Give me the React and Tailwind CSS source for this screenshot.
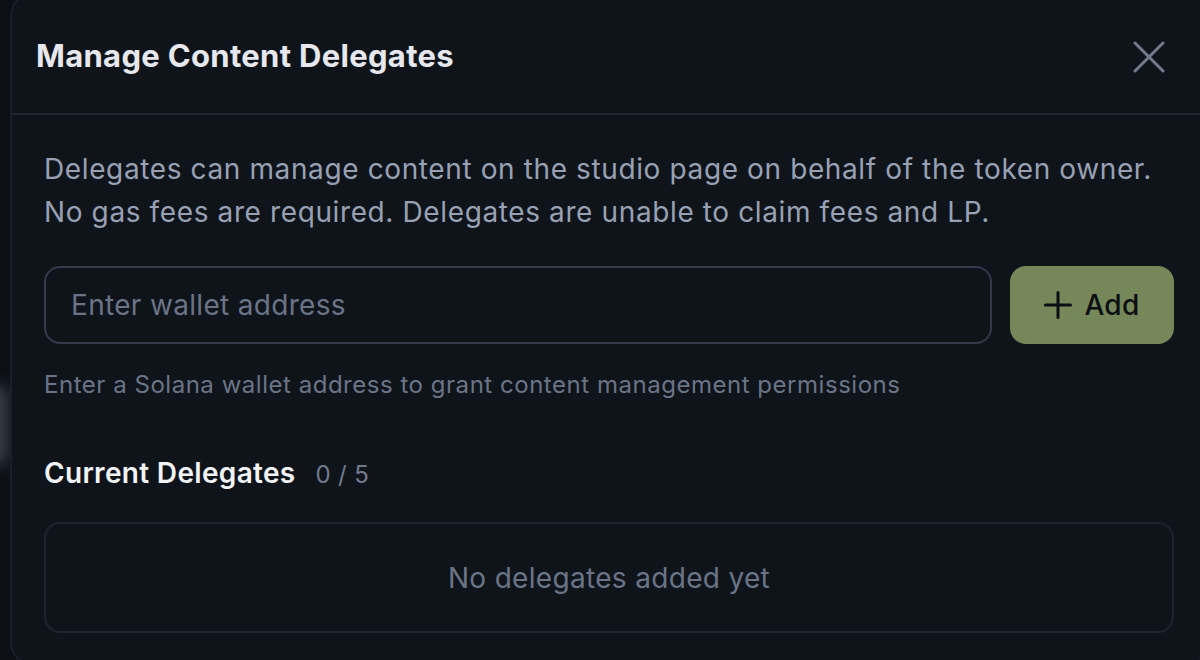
import React, { useState } from 'react';

const FONT = { fontFamily: 'Inter, "Noto Sans", sans-serif' };

export default function App() {
  const [address, setAddress] = useState('');
  const delegates = [];

  return (
    <div className="relative w-[1200px] h-[660px] overflow-hidden bg-[#0c1016] tracking-[0.02em]" style={FONT}>
      {/* backdrop glow behind the dialog */}
      <div className="absolute left-[-14px] top-[385px] w-[22px] h-[80px] rounded-full bg-[#5b6170] blur-[8px] opacity-60" />

      <div className="relative ml-[10px] mt-[-8px] w-[1200px] h-[674px] rounded-[24px] border-2 border-[#1a2029] bg-[#0f141b]">
        {/* Header */}
        <div className="flex items-center justify-between h-[121px] pl-[24px] pr-[43px] pt-[6px] border-b-2 border-[#1f262f]">
          <h2 className="text-[31px] font-bold tracking-[0.01em] text-[#e6e8ee]">Manage Content Delegates</h2>
          <button className="text-[#727b8c]">
            <svg width="32" height="32" viewBox="0 0 32 32" fill="none" stroke="currentColor" strokeWidth="3" strokeLinecap="round">
              <path d="M2 2L30 30M30 2L2 30" />
            </svg>
          </button>
        </div>

        {/* Body */}
        <div className="px-[32px] pt-[33px]">
          <p className="text-[28px] leading-[43px] tracking-[0.022em] text-[#98a1b4]">
            Delegates can manage content on the studio page on behalf of the token owner.
            <br />
            No gas fees are required. Delegates are unable to claim fees and LP.
          </p>

          <div className="flex gap-[18px] mt-[32px]">
            <input
              value={address}
              onChange={(e) => setAddress(e.target.value)}
              placeholder="Enter wallet address"
              className="w-[948px] h-[78px] rounded-[16px] border-2 border-[#323a4c] bg-transparent px-[25px] text-[28px] text-[#e6e8ee] placeholder:text-[#6b7487] outline-none"
            />
            <button className="flex items-center justify-center gap-[12px] w-[164px] h-[78px] rounded-[16px] bg-[#76875a] text-[#0b0e12]">
              <svg width="28" height="28" viewBox="0 0 28 28" fill="none" stroke="currentColor" strokeWidth="3" strokeLinecap="round">
                <path d="M14 1.5V26.5M1.5 14H26.5" />
              </svg>
              <span className="text-[28px] font-medium">Add</span>
            </button>
          </div>

          <p className="mt-[25px] text-[24px] leading-[32px] tracking-[0.022em] text-[#6b7487]">
            Enter a Solana wallet address to grant content management permissions
          </p>

          <div className="flex items-baseline gap-[20px] mt-[54px] leading-[36px]">
            <h3 className="text-[28px] font-semibold text-[#f2f3f6]">Current Delegates</h3>
            <span className="text-[24px] text-[#717a8d]">0 / {5}</span>
          </div>

          <div className="mt-[29px] flex items-center justify-center w-[1130px] h-[111px] rounded-[16px] border-2 border-[#1f252f]">
            {delegates.length === 0 && (
              <span className="text-[28px] text-[#6b7487]">No delegates added yet</span>
            )}
          </div>
        </div>
      </div>
    </div>
  );
}
